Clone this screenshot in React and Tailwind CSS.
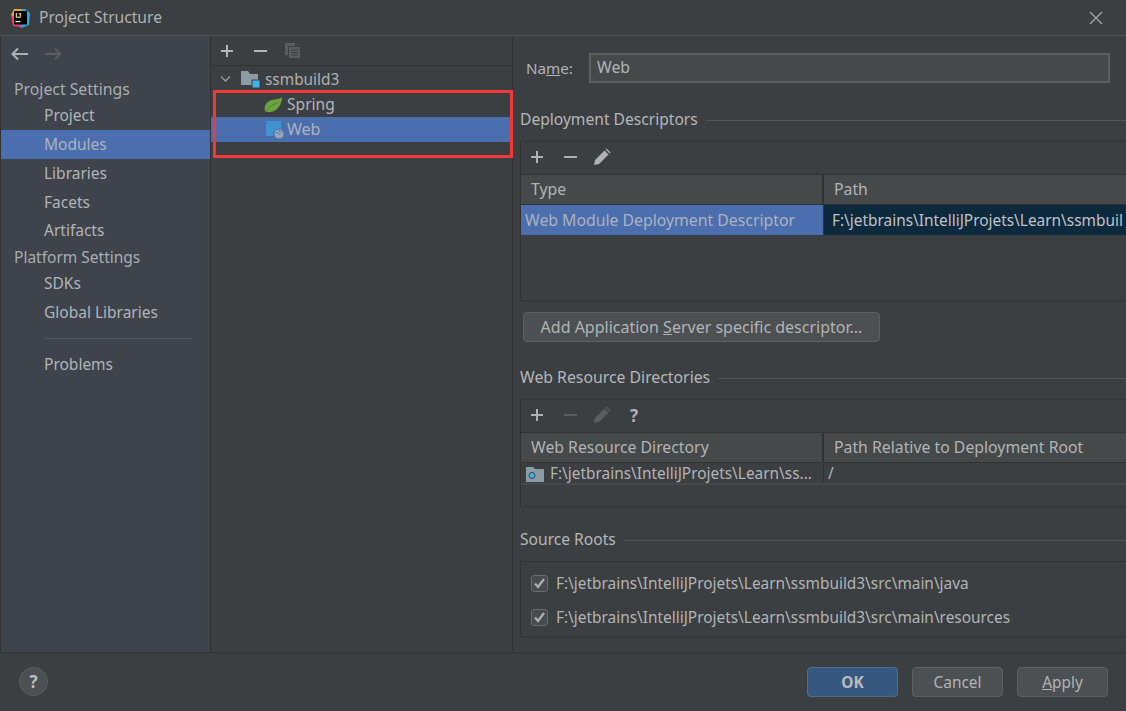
function Plus({ className = "" }) {
  return (
    <svg width="14" height="14" viewBox="0 0 14 14" className={className}>
      <path d="M1 7h12M7 1v12" stroke="currentColor" strokeWidth="2" />
    </svg>
  );
}
function Minus({ className = "" }) {
  return (
    <svg width="14" height="14" viewBox="0 0 14 14" className={className}>
      <path d="M1 7h13" stroke="currentColor" strokeWidth="2" />
    </svg>
  );
}
function Pencil({ className = "" }) {
  return (
    <svg width="18" height="18" viewBox="0 0 18 18" className={className}>
      <path d="M1 17l1-5L11.5 2.5l4 4L6 16z M12.6 1.4l1-1 4 4-1 1z" fill="currentColor" />
    </svg>
  );
}
function Toolbar({ children, className = "" }) {
  return <div className={`flex h-[32px] items-center pb-[2px] ${className}`}>{children}</div>;
}
function SectionTitle({ children, className = "" }) {
  return (
    <div className={`flex h-[20px] items-center gap-2 text-[#b4b7b9] ${className}`}>
      <span className="whitespace-nowrap">{children}</span>
      <div className="h-px flex-1 bg-[#52565a]" />
    </div>
  );
}
function Section({ children, className = "text-[15.8px]" }) {
  return <div className={`flex h-[26px] items-center whitespace-nowrap pl-[13px] text-[#a9adb0] ${className}`}>{children}</div>;
}
function Item({ children, className = "h-[26px] text-[#b1b4b6]" }) {
  return <div className={`flex items-center whitespace-nowrap pl-[43px] text-[15.5px] ${className}`}>{children}</div>;
}
function Check() {
  return (
    <div className="flex h-[17px] w-[17px] shrink-0 items-center justify-center rounded-[3px] border border-[#6b6b6b] bg-[#474b4d]">
      <svg width="13" height="13" viewBox="0 0 13 13">
        <path d="M2 6.5l3 3.5L11 2" stroke="#b0b0b0" strokeWidth="2.2" fill="none" />
      </svg>
    </div>
  );
}
function Button({ children, primary, className = "" }) {
  return (
    <div
      className={`flex h-[30px] w-[91px] items-center justify-center rounded-[4px] border pt-[2px] text-[15.4px] ${primary ? "border-[#4c708c] bg-[#365880] font-bold text-[#bbbbbb]" : "border-[#5e6060] bg-[#4c5052] text-[#b1b4b6]"} ${className}`}
    >
      {children}
    </div>
  );
}

export default function App() {
  return (
    <div
      className="relative flex h-[711px] w-[1126px] flex-col overflow-hidden bg-[#3c3f41] text-[#bbbbbb]"
      style={{ fontFamily: '"Noto Sans", "Open Sans", sans-serif' }}
    >
      {/* title bar */}
      <div className="flex h-[36px] shrink-0 items-center border-b border-[#515557] pl-[10px] pr-[23px]">
        <svg width="20" height="20" viewBox="0 0 20 20" className="shrink-0">
          <path d="M6 1h9l5 4-1 12-8 3-4-3z" fill="#2fa8e0" />
          <path d="M1 7l3-6 8 0 0 9-8 5z" fill="#f9a11b" />
          <path d="M1 7l2 11 9 1-4-9z" fill="#fc3a79" />
          <rect x="4" y="3" width="13" height="13.5" fill="#000" />
          <text x="5.6" y="10" fontSize="6.5" fontWeight="700" fill="#fff" fontFamily="Liberation Sans">IJ</text>
          <rect x="5.5" y="13" width="5" height="1.2" fill="#fff" />
        </svg>
        <span className="ml-[9px] pt-[1px] text-[15.6px] text-[#afb1b3]">Project Structure</span>
        <svg width="14" height="14" viewBox="0 0 14 14" className="ml-auto">
          <path d="M1 1l12 12M13 1L1 13" stroke="#a8a8a8" strokeWidth="1.2" />
        </svg>
      </div>

      {/* body */}
      <div className="flex min-h-0 flex-1">
        {/* sidebar */}
        <div className="flex w-[211px] shrink-0 flex-col border-x border-[#323232] bg-[#3e434c]">
          <div className="flex h-[36px] shrink-0 items-center gap-[15px] pl-[10px]">
            <svg width="18" height="14" viewBox="0 0 18 14">
              <path d="M17 7H2M7 1.5L1.5 7 7 12.5" stroke="#afb1b3" strokeWidth="2" fill="none" />
            </svg>
            <svg width="18" height="14" viewBox="0 0 18 14">
              <path d="M1 7h15M11 1.5L16.5 7 11 12.5" stroke="#5b5e60" strokeWidth="2" fill="none" />
            </svg>
          </div>
          <div className="mt-[5px]">
            <Section>Project Settings</Section>
            <Item>Project</Item>
            <Item className="mt-[1px] h-[29px] bg-[#4b6eaf] text-[#adb2bb]">Modules</Item>
            <Item className="h-[29px] text-[#b1b4b6]">Libraries</Item>
            <Item className="h-[29px] text-[#b1b4b6]">Facets</Item>
            <Item className="h-[28px] text-[#b1b4b6]">Artifacts</Item>
            <Section className="text-[15.5px]">Platform Settings</Section>
            <Item>SDKs</Item>
            <Item className="h-[32px] text-[#b1b4b6]">Global Libraries</Item>
            <div className="ml-[43px] mr-[18px] mt-[9px] h-px bg-[#52565a]" />
            <Item className="mt-[13px] h-[26px] text-[#b1b4b6]">Problems</Item>
          </div>
        </div>

        {/* tree */}
        <div className="flex w-[302px] shrink-0 flex-col border-r border-[#323232]">
          <div className="flex h-[30px] shrink-0 items-center gap-[19px] border-b border-[#323232] pl-[9px] text-[#b4b6b8]">
            <Plus />
            <Minus />
            <svg width="17" height="17" viewBox="0 0 17 17" className="-ml-[2px]">
              <path d="M1 1h10v3H4v9H1z" fill="#5a5d5f" />
              <rect x="5" y="5" width="11" height="11" fill="#5a5d5f" />
              <path d="M7 8h7M7 10.5h7M7 13h7" stroke="#3c3f41" strokeWidth="1" />
            </svg>
          </div>
          <div className="flex h-[26px] items-center pl-[9px] text-[15.4px] text-[#afb1b3]">
            <svg width="11" height="8" viewBox="0 0 11 8">
              <path d="M1 1.5l4.5 4.5L10 1.5" stroke="#9a9c9e" strokeWidth="1.3" fill="none" />
            </svg>
            <svg width="19" height="18" viewBox="0 0 19 18" className="ml-[10px] shrink-0">
              <path d="M0 1h7l2 3h8v11H0z" fill="#8c9ba6" />
              <rect x="11" y="10" width="8" height="8" fill="#3db3e6" stroke="#3c3f41" />
            </svg>
            <span className="ml-[5px] pt-[2px]">ssmbuild3</span>
          </div>
          <div className="flex h-[25px] items-center pl-[53px] text-[15.6px] text-[#b1b4b6]">
            <svg width="19" height="16" viewBox="0 0 19 16" className="shrink-0">
              <path d="M18 0C18 6 15 12 10 14 7 15.5 3 15.5 1 14-.5 9 3 4 8 3c4-.5 8-1 10-3z" fill="#6ba33f" />
              <path d="M2 14C6 9 9 8 13 6" stroke="#4a7a30" strokeWidth="0.8" fill="none" />
            </svg>
            <span className="ml-[4px]">Spring</span>
          </div>
          <div className="flex h-[25px] items-center bg-[#4b6eaf] pl-[55px] text-[16px] text-[#adb2bb]">
            <svg width="18" height="18" viewBox="0 0 18 18" className="shrink-0">
              <rect x="0" y="0" width="15" height="15" fill="#3f94d0" />
              <circle cx="13" cy="13" r="5" fill="#9aa7b5" stroke="#4b6eaf" />
              <path d="M10 12c2-1 3 0 4 2M13 9c1 2 2 2 3 2" stroke="#4b6eaf" strokeWidth="1" fill="none" />
            </svg>
            <span className="mb-[2px] ml-[3px]">Web</span>
          </div>
        </div>

        {/* details */}
        <div className="flex min-w-0 flex-1 flex-col pl-[7px]">
          <div className="mt-[17px] flex h-[30px] items-center pl-[6px]">
            <span className="w-[63px] text-[15.2px] text-[#b1b4b6]">
              Na<span className="underline">m</span>e:
            </span>
            <div className="flex h-[30px] w-[521px] items-center border-2 border-[#5b5e5f] bg-[#45494a] pl-[6px] text-[15.8px] text-[#b1b4b6]">
              Web
            </div>
          </div>

          <SectionTitle className="mt-[27px] text-[15.6px]">Deployment Descriptors</SectionTitle>
          <div className="mt-[11px] h-[160px] border border-r-0 border-[#323232]">
            <Toolbar className="gap-[19px] pl-[9px] text-[#afb1b3]">
              <Plus />
              <Minus />
              <Pencil className="-ml-[3px]" />
            </Toolbar>
            <div className="flex h-[31px] border-y border-y-[#323232] bg-[#45494a] text-[15.8px] text-[#b1b4b6]">
              <div className="flex w-[303px] items-center border-r-2 border-[#323232] pl-[10px]">Type</div>
              <div className="flex flex-1 items-center pl-[10px]">Path</div>
            </div>
            <div className="flex h-[30px] text-[15.8px]">
              <div className="flex w-[302px] items-center overflow-hidden whitespace-nowrap bg-[#4b6eaf] pl-[4px] pt-[2px] text-[#adb2bb]">
                Web Module Deployment Descriptor
              </div>
              <div className="flex flex-1 items-center overflow-hidden whitespace-nowrap border-l border-[#323232] bg-[#0d293e] pl-[8px] pt-[2px] text-[15.4px] text-[#c0c2c4]">
                F:\jetbrains\IntelliJProjets\Learn\ssmbuil
              </div>
            </div>
          </div>
          <div className="ml-[3px] mt-[11px] flex h-[30px] w-[357px] items-center justify-center rounded-[4px] border border-[#5e6060] bg-[#4c5052] text-[16px] text-[#b1b4b6]">
            <span>Add Application <span className="underline">S</span>erver specific descriptor...</span>
          </div>

          <SectionTitle className="mt-[26px] text-[15.8px]">Web Resource Directories</SectionTitle>
          <div className="mt-[11px] h-[108px] border border-r-0 border-[#323232]">
            <Toolbar className="gap-[19px] pl-[9px] text-[#afb1b3]">
              <Plus />
              <Minus className="text-[#5a5d5f]" />
              <Pencil className="-ml-[3px] text-[#5a5d5f]" />
              <span className="text-[17px] font-bold leading-none text-[#afb1b3]">?</span>
            </Toolbar>
            <div className="flex h-[31px] border-y border-y-[#323232] bg-[#45494a] text-[15.8px] text-[#b1b4b6]">
              <div className="flex w-[303px] items-center border-r-2 border-[#323232] pl-[10px]">Web Resource Directory</div>
              <div className="flex flex-1 items-center whitespace-nowrap pl-[10px]">Path Relative to Deployment Root</div>
            </div>
            <div className="flex h-[22px] border-b-2 border-[#45494a] pt-[2px] text-[15.4px] text-[#b1b4b6]">
              <div className="flex w-[302px] items-center whitespace-nowrap pl-[5px]">
                <svg width="19" height="15" viewBox="0 0 19 15" className="mr-[5px] shrink-0">
                  <path d="M0 0h7l2 2h9v13H0z" fill="#8c9ba6" />
                  <circle cx="6" cy="8.5" r="3" fill="#3db3e6" stroke="#3c3f41" />
                </svg>
                F:\jetbrains\IntelliJProjets\Learn\ss...
              </div>
              <div className="flex flex-1 items-center border-l border-[#323232] pl-[4px]">/</div>
            </div>
          </div>

          <SectionTitle className="mt-[23px] text-[15.6px]">Source Roots</SectionTitle>
          <div className="mt-[11px] flex h-[76px] flex-col justify-center gap-[17px] border border-r-0 border-[#323232] pl-[10px] pt-[3px] text-[15.4px] text-[#b1b4b6]">
            <div className="flex h-[17px] items-center gap-[8px] whitespace-nowrap">
              <Check />
              F:\jetbrains\IntelliJProjets\Learn\ssmbuild3\src\main\java
            </div>
            <div className="flex h-[17px] items-center gap-[8px] whitespace-nowrap">
              <Check />
              F:\jetbrains\IntelliJProjets\Learn\ssmbuild3\src\main\resources
            </div>
          </div>
        </div>
      </div>

      {/* footer */}
      <div className="flex h-[59px] shrink-0 items-center border-t border-[#323232] pb-[1px] pl-[19px] pr-[18px]">
        <div className="flex h-[29px] w-[29px] items-center justify-center rounded-full border border-[#5a5e60] bg-[#4c5052] text-[17px] font-bold text-[#bdbdbd]">
          ?
        </div>
        <Button primary className="ml-auto">OK</Button>
        <Button className="ml-[14px]">Cancel</Button>
        <Button className="ml-[14px]">
          <span><span className="underline">A</span>pply</span>
        </Button>
      </div>

      {/* annotation */}
      <div className="absolute left-[213px] top-[90px] h-[68px] w-[300px] border-[3px] border-[#f03a3a]" />
    </div>
  );
}
